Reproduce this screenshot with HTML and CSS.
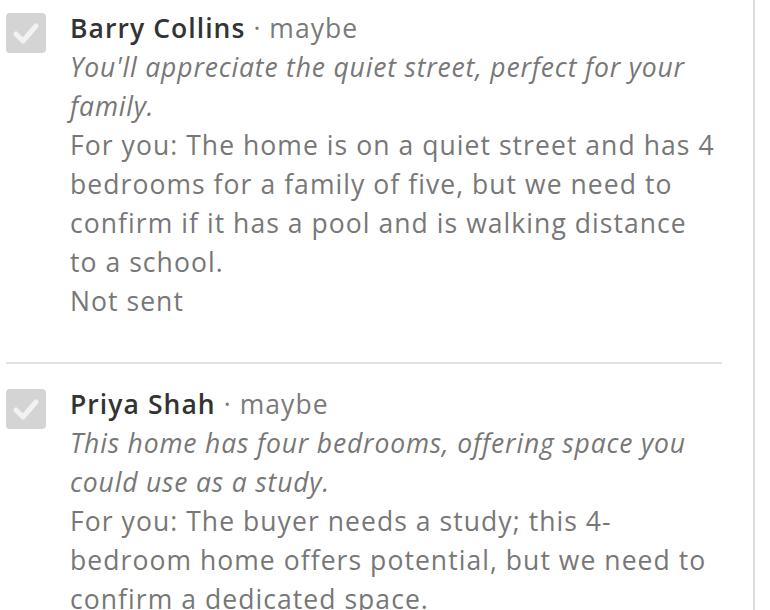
FILE: index.html
```html
<!DOCTYPE html>
<html>
<head>
<meta charset="utf-8">
<link rel="stylesheet" href="styles.css">
</head>
<body>
<div class="panel">
  <ul class="list">
    <li class="item">
      <span class="check"><svg viewBox="0 0 40 40" width="40" height="40"><path d="M10 21 L17 28 L30 13" fill="none" stroke="#f2f2f2" stroke-width="5" stroke-linecap="round" stroke-linejoin="round"/></svg></span>
      <div class="body">
        <div class="head"><span class="name">Barry Collins</span><span class="status"> · maybe</span></div>
        <div class="pitch">You'll appreciate the quiet street, perfect for your family.</div>
        <div class="note">For you: The home is on a quiet street and has 4 bedrooms for a family of five, but we need to confirm if it has a pool and is walking distance to a school.</div>
        <div class="sent">Not sent</div>
      </div>
    </li>
    <li class="item">
      <span class="check"><svg viewBox="0 0 40 40" width="40" height="40"><path d="M10 21 L17 28 L30 13" fill="none" stroke="#f2f2f2" stroke-width="5" stroke-linecap="round" stroke-linejoin="round"/></svg></span>
      <div class="body">
        <div class="head"><span class="name">Priya Shah</span><span class="status"> · maybe</span></div>
        <div class="pitch">This home has four bedrooms, offering space you could use as a study.</div>
        <div class="note">For you: The buyer needs a study; this 4-bedroom home offers potential, but we need to confirm a dedicated space.</div>
        <div class="sent">Not sent</div>
      </div>
    </li>
  </ul>
</div>
</body>
</html>
```
FILE: styles.css
```css
html, body {
  margin: 0;
  padding: 0;
  background: #fff;
  height: 100%;
  overflow: hidden;
}
body {
  font-family: "Open Sans", "Noto Sans", sans-serif;
  font-size: 26.5px;
  line-height: 39px;
  letter-spacing: 0.04em;
  color: #777;
}
.panel {
  width: 753px;
  height: 100%;
  border-right: 2px solid #dcdcdc;
  overflow: hidden;
}
.list {
  list-style: none;
  margin: -12px 0 0 0;
  padding: 0;
  width: 716px;
  padding-left: 6px;
}
.item {
  display: flex;
  gap: 24px;
  padding: 21px 0 41px;
  border-bottom: 2px solid #e2e2e2;
}
.check {
  flex: none;
  width: 40px;
  height: 40px;
  margin-top: 4px;
  border-radius: 4px;
  background: #d4d4d4;
  display: block;
}
.check svg {
  display: block;
}
.body {
  flex: 1;
  min-width: 0;
}
.name {
  color: #333;
  font-weight: 600;
}
.status {
  color: #7a7a7a;
}
.pitch {
  font-style: italic;
  letter-spacing: 0.031em;
  color: #777;
}
.note, .sent {
  color: #777;
}
```
